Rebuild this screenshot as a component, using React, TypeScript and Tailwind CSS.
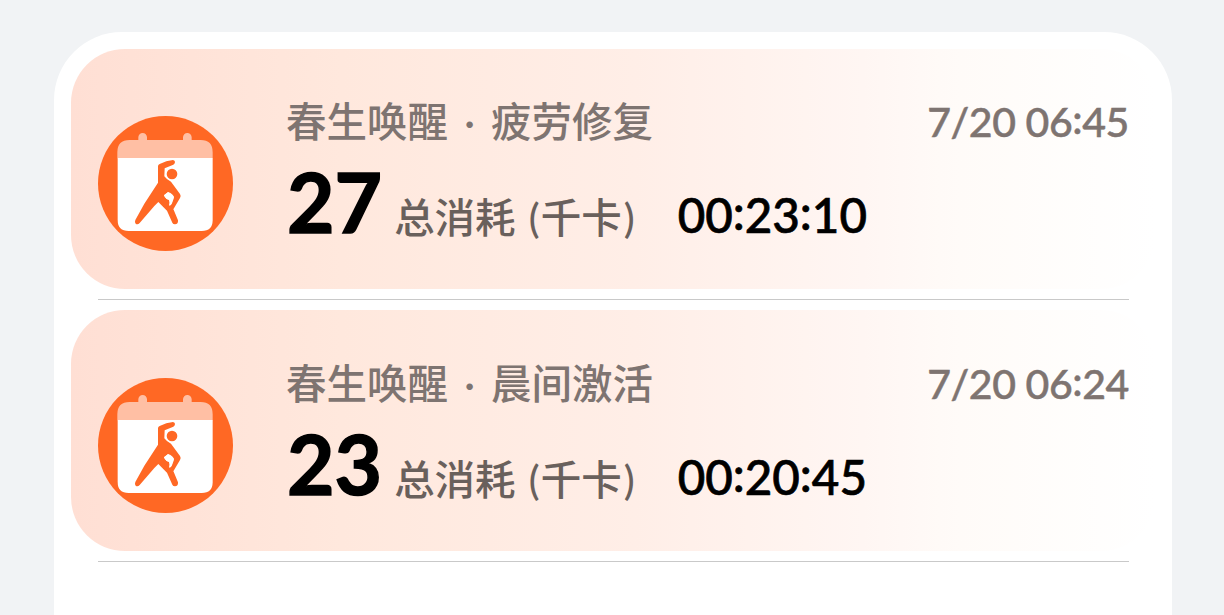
interface Workout {
  title: string
  date: string
  calories: number
  duration: string
}

const workouts: Workout[] = [
  { title: '春生唤醒 · 疲劳修复', date: '7/20 06:45', calories: 27, duration: '00:23:10' },
  { title: '春生唤醒 · 晨间激活', date: '7/20 06:24', calories: 23, duration: '00:20:45' },
]

function StretchIcon() {
  return (
    <svg viewBox="24 33 405 405" className="mt-[67px] h-[135px] w-[135px] shrink-0">
      <circle cx="226.500" cy="235.500" r="202.500" fill="#ff6824" />
      <path d="M82 160V142Q82 105 119 105H145V97a13 13 0 0 1 26 0V105H279V97a13 13 0 0 1 26 0V105H332Q368 105 368 142V160Z" fill="#ffbfa4" />
      <path d="M83 159H368V345Q368 378 335 378H116Q83 378 83 345Z" fill="#fff" />
      <circle cx="246" cy="207" r="16" fill="#ff6824" />
      <path
        d="M204 183Q205 179 209 177Q229 167 249 165Q255 166 255 171Q255 176 250 179L224 190L223 214Q230 224 243 230L270 267Q274 273 270 279L251 311Q248 316 242 316Q233 314 231 308Q232 303 237 302Q244 302 246 295L252 278Q251 267 234 261L222 271Q223 278 230 282L238 284Q242 291 238 300L246 314L250 312L264 346Q265 358 255 358Q249 358 247 353L231 317L205 291L193 303L149 354Q143 360 137 356Q133 352 136 345L163 296L204 233Z"
        fill="#ff6824"
      />
      <path d="M222 271L234 262L251 274L245 295Q243 302 237 302Q240 293 237 285L230 282Z" fill="#fff" />
    </svg>
  )
}

// Digits with the colons lifted to the middle of the figures
function Clock({ value }: { value: string }) {
  return value.split(':').map((part, i) => (
    <span key={i}>
      {i > 0 && <span className="relative top-[-0.07em]">:</span>}
      {part}
    </span>
  ))
}

function WorkoutRow({ workout }: { workout: Workout }) {
  return (
    <li className="group flex h-[262px] flex-col">
      <div className="flex h-[240px] shrink-0 rounded-[54px] bg-[linear-gradient(to_right,#ffdfd4,#ffe8dd_25%,#ffeee7_52%,#fff6f3_73%,#fffbf8_82%,#fff)] px-[27px] group-not-first:-mt-px group-not-first:h-[241px] group-not-first:pt-px">
        <StretchIcon />
        <div className="ml-[53px] flex-1 pt-[48px] whitespace-nowrap">
          <div className="flex h-[50px] items-start justify-between text-[40.5px] leading-[50px] font-medium text-[#7e7471]">
            <span className="[word-spacing:6px]">{workout.title}</span>
            <span className="mr-[-1px] text-[41px] tracking-[-0.4px] [-webkit-text-stroke:0.5px]"><Clock value={workout.date} /></span>
          </div>
          <div className="mt-[9px] flex h-[90px] items-baseline leading-[90px]">
            <span className="ml-[1px] text-[82px] font-bold text-black [-webkit-text-stroke:1.5px]">{workout.calories}</span>
            <span className="ml-[12px] text-[40.5px] font-medium text-[#69605c] [word-spacing:3px]">总消耗 (<span className="ml-[1px]">千卡</span><span className="ml-[2px]">)</span></span>
            <span className="ml-[43px] text-[47.5px] font-medium text-black [-webkit-text-stroke:0.7px]"><Clock value={workout.duration} /></span>
          </div>
        </div>
      </div>
      <div className="mt-[10px] mr-[26px] ml-[27px] h-px shrink-0 bg-[#c9c9c9]" />
    </li>
  )
}

export default function App() {
  return (
    <main className="h-[615px] overflow-hidden bg-[#f1f3f5] px-[54px] pt-[32px] font-['Lato','Noto_Sans_CJK_SC',sans-serif]">
      <ul className="h-[700px] w-[1118px] rounded-t-[68px] bg-white px-[17px] pt-[17px]">
        {workouts.map(w => (
          <WorkoutRow key={w.date} workout={w} />
        ))}
      </ul>
    </main>
  )
}
